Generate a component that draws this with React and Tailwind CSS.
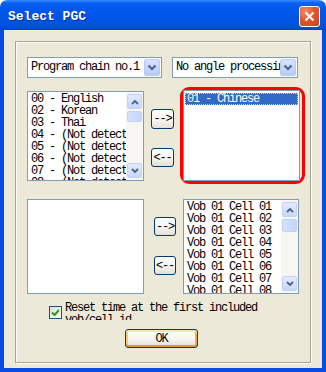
import React from 'react';

const mono = "font-['Liberation_Mono',monospace] text-[12px] tracking-[-1.2px] text-black";

function Chevron({ up }) {
  return (
    <svg width="8" height="6" viewBox="0 0 8 6">
      <path d={up ? 'M1 5 L4 2 L7 5' : 'M1 1 L4 4 L7 1'} fill="none" stroke="#4D6185" strokeWidth="1.8" />
    </svg>
  );
}

function Combo({ text, w }) {
  return (
    <div className={`flex h-[21px] items-center border border-[#7F9DB9] bg-white ${w}`}>
      <div className={`flex-1 overflow-hidden whitespace-nowrap pl-[3px] leading-[19px] ${mono}`}>{text}</div>
      <div className="mr-[1px] flex h-[17px] w-[16px] shrink-0 items-center justify-center rounded-[2px] border border-[#BACBF2] bg-[linear-gradient(180deg,#DCE7FE_0%,#C3D5FC_50%,#B4CBFA_100%)]">
        <svg width="10" height="7" viewBox="0 0 10 7">
          <path d="M1.5 1.5 L5 5 L8.5 1.5" fill="none" stroke="#4D6185" strokeWidth="2" />
        </svg>
      </div>
    </div>
  );
}

function ScrollBar({ thumb }) {
  return (
    <div className="flex w-[17px] shrink-0 flex-col items-center bg-[#F7F6F2] py-[2px]">
      <div className="flex h-[15px] w-[15px] items-center justify-center rounded-[2px] border border-[#C2D2F4] bg-[linear-gradient(180deg,#E3ECFE_0%,#C6D7FC_100%)]">
        <Chevron up />
      </div>
      <div className={`mt-[2px] w-[15px] rounded-[2px] border border-[#C2D2F4] bg-[linear-gradient(90deg,#D4E1FD_0%,#C4D6FC_100%)] ${thumb}`} />
      <div className="flex-1" />
      <div className="flex h-[15px] w-[15px] items-center justify-center rounded-[2px] border border-[#C2D2F4] bg-[linear-gradient(180deg,#E3ECFE_0%,#C6D7FC_100%)]">
        <Chevron />
      </div>
    </div>
  );
}

function ListBox({ items, size, scroll, thumb, selected, pad }) {
  return (
    <div className={`flex border border-[#7F9DB9] bg-white ${size}`}>
      <div className={`flex-1 overflow-hidden ${pad}`}>
        {items.map((t, i) =>
          i === selected ? (
            <div
              key={t}
              className={`ml-[1px] mr-[1px] h-[12px] whitespace-nowrap bg-[#316AC5] pl-[2px] leading-[12px] outline-1 -outline-offset-1 outline-dotted outline-[#E8D48A] ${mono} text-white`}
            >
              {t}
            </div>
          ) : (
            <div key={t} className={`h-[12px] whitespace-nowrap pl-[3px] leading-[12px] ${mono}`}>
              {t}
            </div>
          )
        )}
      </div>
      {scroll && <ScrollBar thumb={thumb} />}
    </div>
  );
}

function XpButton({ label, size }) {
  return (
    <div
      className={`flex items-center justify-center rounded-[3px] border border-[#003C74] bg-[linear-gradient(180deg,#FFFFFF_0%,#F5F4EF_55%,#E2E0D6_100%)] leading-none ${mono} ${size}`}
    >
      {label}
    </div>
  );
}

export default function App() {
  const langs = [
    '00 - English',
    '02 - Korean',
    '03 - Thai',
    '04 - (Not detected)',
    '05 - (Not detected)',
    '06 - (Not detected)',
    '07 - (Not detected)',
    '08 - (Not detected)',
  ];
  const cells = Array.from({ length: 10 }, (_, i) => `Vob 01 Cell ${String(i + 1).padStart(2, '0')}`);

  return (
    <div className="h-[372px] w-[326px] overflow-hidden bg-white">
      {/* title bar */}
      <div className="flex h-[30px] items-center rounded-t-[7px] bg-[linear-gradient(180deg,#3C8CFF_0%,#0A62F2_10%,#0058EE_25%,#0055E6_60%,#0051E0_85%,#0044D2_100%)] pt-[3px]">
        <div className="ml-[8px] flex-1 font-['Liberation_Mono',monospace] text-[13px] font-bold text-white [text-shadow:1px_1px_0_#0B2A8C]">
          Select PGC
        </div>
        <div className="mr-[6px] flex h-[21px] w-[21px] items-center justify-center rounded-[3px] border border-white bg-[radial-gradient(circle_at_30%_25%,#F0906C_0%,#E0562E_45%,#C8401E_100%)]">
          <svg width="11" height="11" viewBox="0 0 11 11">
            <path d="M1.5 1.5 L9.5 9.5 M9.5 1.5 L1.5 9.5" stroke="#fff" strokeWidth="2" />
          </svg>
        </div>
      </div>

      {/* body */}
      <div className="h-[342px] border-x-4 border-b-4 border-[#0A4BE3] bg-[#ECE9D8] px-[11px] pt-[11px]">
        <div className="flex h-[322px] flex-col border border-[#A5A297] shadow-[1px_1px_0_#fff,inset_1px_1px_0_#fff]">
          {/* combos */}
          <div className="mt-[15px] flex gap-[10px] pl-[11px]">
            <Combo text="Program chain no.1" w="w-[135px]" />
            <Combo text="No angle processing" w="w-[126px]" />
          </div>

          {/* audio streams */}
          <div className="mt-[9px] flex items-start pl-[11px]">
            <div className="mt-[4px]">
              <ListBox items={langs} size="h-[90px] w-[117px]" scroll thumb="h-[11px]" pad="pt-[1px]" />
            </div>
            <div className="ml-[7px] flex w-[23px] flex-col">
              <XpButton label="-->" size="mt-[22px] h-[20px] w-[23px]" />
              <XpButton label="<--" size="mt-[19px] h-[19px] w-[23px]" />
            </div>
            <div className="ml-[6px] rounded-[9px] border-[3px] border-[#FF0000] pr-[2px]">
              <ListBox items={['01 - Chinese']} size="h-[91px] w-[117px]" selected={0} pad="pt-[2px]" />
            </div>
          </div>

          {/* cells */}
          <div className="mt-[15px] flex items-start pl-[11px]">
            <ListBox items={[]} size="h-[95px] w-[117px]" pad="" />
            <div className="ml-[10px] flex w-[22px] flex-col">
              <XpButton label="-->" size="mt-[18px] h-[19px] w-[22px]" />
              <XpButton label="<--" size="mt-[20px] h-[19px] w-[22px]" />
            </div>
            <div className="ml-[7px]">
              <ListBox items={cells} size="h-[95px] w-[116px]" scroll thumb="h-[13px]" pad="pt-[1px]" />
            </div>
          </div>

          {/* checkbox */}
          <div className="mt-[8px] flex items-start pl-[33px]">
            <div className="mt-[4px] flex h-[13px] w-[13px] items-center justify-center border border-[#1C5180] bg-[linear-gradient(135deg,#DCDCD7_0%,#FFFFFF_100%)]">
              <svg width="9" height="9" viewBox="0 0 9 9">
                <path d="M1 4.5 L3.5 7 L8 2" fill="none" stroke="#21A121" strokeWidth="2" />
              </svg>
            </div>
            <div className={`ml-[3px] h-[18px] w-[200px] overflow-hidden leading-[12px] ${mono}`}>
              Reset time at the first included vob/cell id
            </div>
          </div>

          {/* ok */}
          <div className="mt-[9px] pl-[109px]">
            <div className="flex h-[19px] w-[73px] items-center justify-center rounded-[3px] border border-[#003C74] bg-[linear-gradient(180deg,#FFFFFF_0%,#F5F4EF_55%,#E2E0D6_100%)] shadow-[inset_0_2px_0_#FFE7A2,inset_0_-2px_0_#E59A1A,inset_2px_0_0_#F8CB6C,inset_-2px_0_0_#EFB03A]">
              <span className={`leading-none ${mono}`}>OK</span>
            </div>
          </div>
        </div>
      </div>
    </div>
  );
}
